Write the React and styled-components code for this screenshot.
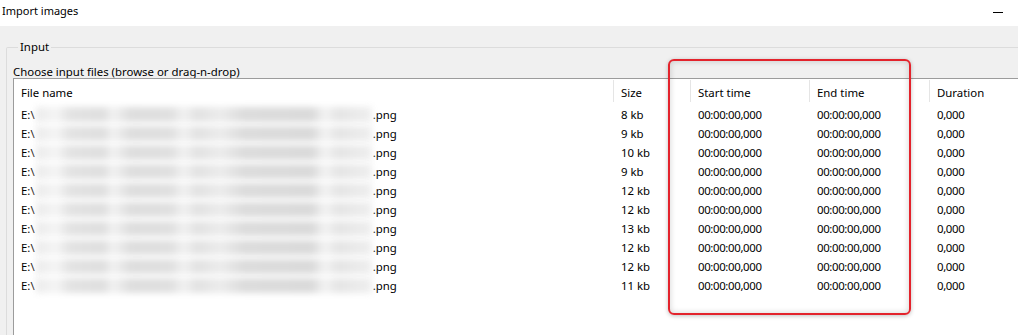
import React from 'react';
import styled, { createGlobalStyle } from 'styled-components';

const GlobalStyle = createGlobalStyle`
  html, body {
    margin: 0;
    padding: 0;
    background: #f0f0f0;
  }
  body {
    font-family: "Noto Sans", "Open Sans", sans-serif;
    font-size: 11.4px;
    color: #000;
  }
`;

const Window = styled.div`
  position: relative;
  width: 1018px;
  height: 335px;
  overflow: hidden;
  display: flex;
  flex-direction: column;
  background: #f0f0f0;
`;

const TitleBar = styled.div`
  height: 26px;
  flex: none;
  background: #fff;
  display: flex;
  align-items: center;
  justify-content: space-between;
  padding: 0 15px 6px 2px;
  box-sizing: border-box;
`;

const Title = styled.span`
  font-size: 11px;
`;

const MinButton = styled.span`
  width: 10px;
  height: 1px;
  background: #000;
  margin-bottom: -4px;
`;

const Body = styled.div`
  flex: 1;
  display: flex;
  flex-direction: column;
  padding: 13px 0 0 6px;
  min-height: 0;
`;

const GroupBox = styled.fieldset`
  flex: 1;
  margin: 0 -4px 0 0;
  padding: 5px 0 0 6px;
  border: 1px solid #dcdcdc;
  border-bottom: none;
  border-radius: 2px 0 0 0;
  display: flex;
  flex-direction: column;
  min-height: 0;
  min-width: 0;
`;

const Legend = styled.legend`
  padding: 0 2px;
  margin-left: 5px;
  line-height: 16px;
`;

const Hint = styled.div`
  line-height: 16px;
  padding-top: 4px;
  margin-bottom: -2px;
`;

const ListBox = styled.div`
  flex: 1;
  background: #fff;
  border: 1px solid #9c9c9c;
  border-right: none;
  border-bottom: none;
  min-height: 0;
`;

const HeaderRow = styled.div`
  display: flex;
  height: 26px;
  align-items: stretch;
`;

const HeaderCell = styled.div`
  width: ${p => p.$w}px;
  flex: none;
  box-sizing: border-box;
  padding: 2px 0 0 7px;
  display: flex;
  align-items: center;
  border-right: 1px solid #e5e5e5;
  margin: 1px 0 3px;
  &:last-child {
    border-right: none;
  }
`;

const Row = styled.div`
  display: flex;
  height: 19px;
  align-items: center;
`;

const Cell = styled.div`
  width: ${p => p.$w}px;
  flex: none;
  box-sizing: border-box;
  padding-left: 7px;
  white-space: nowrap;
  display: flex;
  align-items: center;
  letter-spacing: ${p => (p.$num ? '-0.35px' : '0')};
`;

const Blur = styled.span`
  display: inline-block;
  width: 336px;
  height: 15px;
  margin: 0 1px 0 1px;
  background: linear-gradient(
    to right,
    #ebebeb 0%,
    #f5f5f5 6%,
    #e3e3e3 10%,
    #dfdfdf 20%,
    #f2f2f2 23%,
    #dedede 28%,
    #e0e0e0 40%,
    #f1f1f1 44%,
    #e2e2e2 48%,
    #ececec 55%,
    #dcdcdc 62%,
    #dadada 82%,
    #f3f3f3 86%,
    #e5e5e5 90%,
    #efefef 100%
  );
  filter: blur(3px);
`;

const Annotation = styled.div`
  position: absolute;
  left: 668px;
  top: 59px;
  width: 243px;
  height: 256px;
  box-sizing: border-box;
  border: 2px solid #e3232c;
  border-radius: 6px;
  box-shadow: inset 0 0 6px rgba(0, 0, 0, 0.18), 0 1px 4px rgba(0, 0, 0, 0.25);
  pointer-events: none;
`;

const cols = [
  { label: 'File name', w: 600 },
  { label: 'Size', w: 77 },
  { label: 'Start time', w: 119 },
  { label: 'End time', w: 120 },
  { label: 'Duration', w: 100 },
];

const sizes = [8, 9, 10, 9, 12, 12, 13, 12, 12, 11];

export default function App() {
  return (
    <Window>
      <GlobalStyle />
      <TitleBar>
        <Title>Import images</Title>
        <MinButton />
      </TitleBar>
      <Body>
        <GroupBox>
          <Legend>Input</Legend>
          <Hint>Choose input files (browse or drag-n-drop)</Hint>
          <ListBox>
            <HeaderRow>
              {cols.map(c => (
                <HeaderCell key={c.label} $w={c.w}>{c.label}</HeaderCell>
              ))}
            </HeaderRow>
            {sizes.map((s, i) => (
              <Row key={i}>
                <Cell $w={cols[0].w}>E:\<Blur />.png</Cell>
                <Cell $w={cols[1].w}>{s} kb</Cell>
                <Cell $w={cols[2].w} $num>00:00:00,000</Cell>
                <Cell $w={cols[3].w} $num>00:00:00,000</Cell>
                <Cell $w={cols[4].w} $num>0,000</Cell>
              </Row>
            ))}
          </ListBox>
        </GroupBox>
      </Body>
      <Annotation />
    </Window>
  );
}
